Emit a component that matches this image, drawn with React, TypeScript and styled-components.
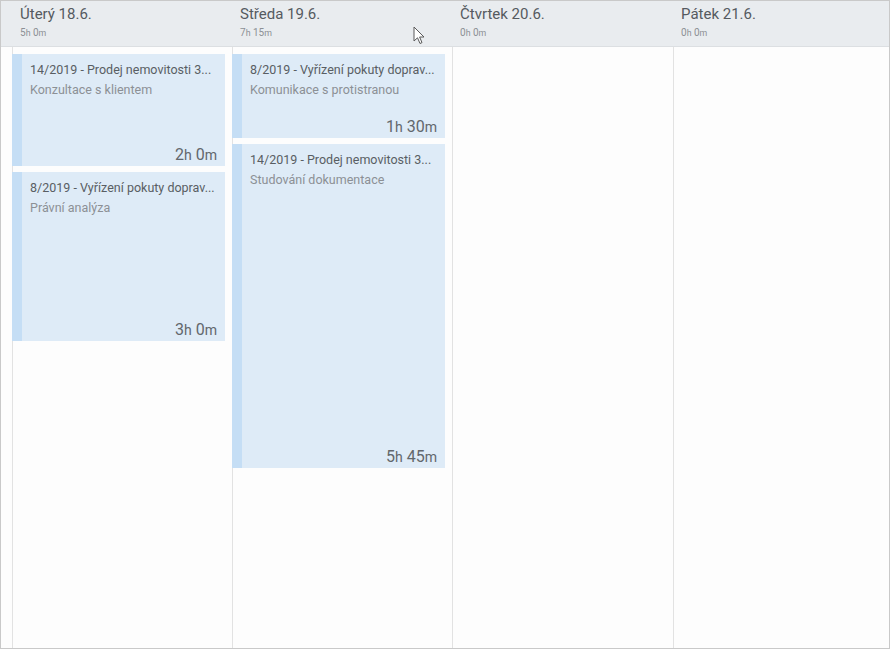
import React, { FC } from 'react';
import styled, { createGlobalStyle } from 'styled-components';

const GlobalStyle = createGlobalStyle`
	html, body {
		margin: 0;
		padding: 0;
		background: #ffffff;
		font-family: Roboto, 'Noto Sans', 'Liberation Sans', sans-serif;
	}
`;

const HOUR = 56;

const Frame = styled.div`
	position: relative;
	width: 888px;
	height: 647px;
	border: 1px solid #c9c9c9;
	display: flex;
	flex-direction: column;
	background: #fdfdfd;
	overflow: hidden;
`;

const Grid = styled.div`
	display: grid;
	grid-template-columns: 11px 220px 220px 221px 1fr;
`;

const HeaderRow = styled(Grid)`
	height: 45px;
	background: #e9ecef;
	border-bottom: 1px solid #dcdfe2;
`;

const BodyRow = styled(Grid)`
	flex: 1;
`;

const HeaderCell = styled.div`
	padding: 4px 8px 0;
	display: flex;
	flex-direction: column;
`;

const DayTitle = styled.div`
	font-size: 15px;
	line-height: 18px;
	color: #555a5f;
`;

const DayTotal = styled.div`
	margin-top: 4px;
	font-size: 10px;
	line-height: 12px;
	color: #8c9095;
`;

const Unit = styled.span`
	font-size: 0.88em;
`;

const Column = styled.div`
	border-left: 1px solid #e2e2e2;
	padding: 7px 7px 0 0;
	display: flex;
	flex-direction: column;
	gap: 6px;
`;

const Card = styled.div<{ $hours: number }>`
	margin-left: -1px;
	height: ${({ $hours }) => $hours * HOUR}px;
	flex: none;
	background: #deebf7;
	border-left: 10px solid #c5def5;
	padding: 8px 8px 1px;
	box-sizing: border-box;
	display: flex;
	flex-direction: column;
	min-width: 0;
`;

const CardTitle = styled.div`
	font-size: 12.5px;
	line-height: 16px;
	color: #595e63;
	white-space: nowrap;
	overflow: hidden;
`;

const CardNote = styled.div`
	margin-top: 4px;
	font-size: 12.5px;
	line-height: 16px;
	color: #8c9095;
`;

const Duration = styled.div`
	margin-top: auto;
	text-align: right;
	font-size: 16px;
	line-height: 20px;
	color: #62676c;
`;

const Cursor = styled.svg`
	position: absolute;
	left: 412px;
	top: 25px;
`;

type Entry = { title: string; note: string; hours: number; h: number; m: number };

type Day = { name: string; total: [number, number]; entries: Entry[] };

const days: Day[] = [
	{
		name: 'Úterý 18.6.',
		total: [5, 0],
		entries: [
			{ title: '14/2019 - Prodej nemovitosti 3...', note: 'Konzultace s klientem', hours: 2, h: 2, m: 0 },
			{ title: '8/2019 - Vyřízení pokuty doprav...', note: 'Právní analýza', hours: 3.02, h: 3, m: 0 }
		]
	},
	{
		name: 'Středa 19.6.',
		total: [7, 15],
		entries: [
			{ title: '8/2019 - Vyřízení pokuty doprav...', note: 'Komunikace s protistranou', hours: 1.5, h: 1, m: 30 },
			{ title: '14/2019 - Prodej nemovitosti 3...', note: 'Studování dokumentace', hours: 5.78, h: 5, m: 45 }
		]
	},
	{ name: 'Čtvrtek 20.6.', total: [0, 0], entries: [] },
	{ name: 'Pátek 21.6.', total: [0, 0], entries: [] }
];

const Time: FC<{ h: number; m: number }> = ({ h, m }) => (
	<>
		{h}
		<Unit>h</Unit> {m}
		<Unit>m</Unit>
	</>
);

const App: FC = () => (
	<>
		<GlobalStyle />
		<Frame>
			<HeaderRow>
				<div />
				{days.map((d) => (
					<HeaderCell key={d.name}>
						<DayTitle>{d.name}</DayTitle>
						<DayTotal>
							<Time h={d.total[0]} m={d.total[1]} />
						</DayTotal>
					</HeaderCell>
				))}
			</HeaderRow>
			<BodyRow>
				<div />
				{days.map((d) => (
					<Column key={d.name}>
						{d.entries.map((e, i) => (
							<Card key={i} $hours={e.hours}>
								<CardTitle>{e.title}</CardTitle>
								<CardNote>{e.note}</CardNote>
								<Duration>
									<Time h={e.h} m={e.m} />
								</Duration>
							</Card>
						))}
					</Column>
				))}
			</BodyRow>
			<Cursor width="14" height="20" viewBox="0 0 14 20">
				<path
					d="M1 1 L1 15 L4.5 11.8 L7 17.5 L9 16.6 L6.6 11 L11 11 Z"
					fill="#ffffff"
					stroke="#5a5a5a"
					strokeWidth="1"
					strokeLinejoin="round"
				/>
			</Cursor>
		</Frame>
	</>
);

export default App;
